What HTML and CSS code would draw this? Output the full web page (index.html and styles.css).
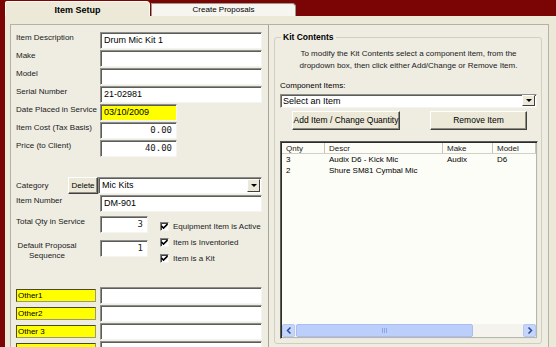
FILE: index.html
```html
<!DOCTYPE html>
<html>
<head>
	<meta charset="UTF-8">
	<title>Item Setup</title>
	<link rel="stylesheet" href="styles.css">
</head>
<body>

<div class="tabs">
	<div class="tab tabOn">Item Setup</div>
	<div class="tab">Create Proposals</div>
</div>

<div class="panel">
<div class="frame">

	<div class="left">
		<div class="row"><span class="lbl">Item Description</span><span class="box wide">Drum Mic Kit 1</span></div>
		<div class="row"><span class="lbl">Make</span><span class="box wide"></span></div>
		<div class="row"><span class="lbl">Model</span><span class="box wide"></span></div>
		<div class="row"><span class="lbl">Serial Number</span><span class="box wide">21-02981</span></div>
		<div class="row"><span class="lbl">Date Placed in Service</span><span class="box short yellow">03/10/2009</span></div>
		<div class="row"><span class="lbl">Item Cost (Tax Basis)</span><span class="box short num">0.00</span></div>
		<div class="row"><span class="lbl">Price (to Client)</span><span class="box short num">40.00</span></div>

		<div class="catRow">
			<span class="lbl catLbl">Category</span>
			<span class="btn delBtn">Delete</span>
			<span class="box combo catCombo">Mic Kits<span class="drop"><i></i></span></span>
		</div>
		<div class="row"><span class="lbl">Item Number</span><span class="box wide">DM-901</span></div>

		<div class="qtyBlock">
			<div class="qtyCol">
				<div class="row"><span class="lbl">Total Qty in Service</span><span class="box tiny num">3</span></div>
				<div class="row seqRow"><span class="lbl seqLbl">Default Proposal<br>Sequence</span><span class="box tiny num">1</span></div>
			</div>
			<div class="checks">
				<div class="chk"><span class="cb"><svg width="7" height="7" viewBox="0 0 7 7"><path d="M0.5 3 L2.5 5 L6.5 1" fill="none" stroke="#000" stroke-width="1.6"/></svg></span>Equipment Item is Active</div>
				<div class="chk"><span class="cb"><svg width="7" height="7" viewBox="0 0 7 7"><path d="M0.5 3 L2.5 5 L6.5 1" fill="none" stroke="#000" stroke-width="1.6"/></svg></span>Item is Inventoried</div>
				<div class="chk"><span class="cb"><svg width="7" height="7" viewBox="0 0 7 7"><path d="M0.5 3 L2.5 5 L6.5 1" fill="none" stroke="#000" stroke-width="1.6"/></svg></span>Item is a Kit</div>
			</div>
		</div>

		<div class="others">
			<div class="row"><span class="ylbl">Other1</span><span class="box wide"></span></div>
			<div class="row"><span class="ylbl">Other2</span><span class="box wide"></span></div>
			<div class="row"><span class="ylbl">Other 3</span><span class="box wide"></span></div>
			<div class="row"><span class="ylbl">Supplier</span><span class="box wide"></span></div>
		</div>
	</div>

	<fieldset class="kit">
		<legend>Kit Contents</legend>
		<p class="help">To modify the Kit Contents select a component item, from the<br>dropdown box, then click either Add/Change or Remove Item.</p>
		<div class="compLbl">Component Items:</div>
		<span class="box combo compCombo">Select an Item<span class="drop"><i></i></span></span>
		<div class="kitBtns">
			<span class="btn addBtn">Add Item / Change Quantity</span>
			<span class="btn remBtn">Remove Item</span>
		</div>

		<div class="list">
			<div class="lhead">
				<span class="c1">Qnty</span><span class="c2">Descr</span><span class="c3">Make</span><span class="c4">Model</span>
			</div>
			<div class="lrow"><span class="c1">3</span><span class="c2">Audix D6 - Kick Mic</span><span class="c3">Audix</span><span class="c4">D6</span></div>
			<div class="lrow"><span class="c1">2</span><span class="c2">Shure SM81 Cymbal Mic</span><span class="c3"></span><span class="c4"></span></div>
			<div class="lfill"></div>
			<div class="hscroll">
				<span class="sarrow"><svg width="6" height="7" viewBox="0 0 6 7"><path d="M4.5 0.5 L1.5 3.5 L4.5 6.5" fill="none" stroke="#2c4c9c" stroke-width="1.5"/></svg></span>
				<span class="thumb"><span class="grip"></span></span>
				<span class="track"></span>
				<span class="sarrow"><svg width="6" height="7" viewBox="0 0 6 7"><path d="M1.5 0.5 L4.5 3.5 L1.5 6.5" fill="none" stroke="#2c4c9c" stroke-width="1.5"/></svg></span>
			</div>
		</div>
	</fieldset>

</div>
</div>

</body>
</html>
```

FILE: styles.css
```css
body{
	margin:0;
	background:#7b0404;
	font-family:"Liberation Sans", Arial, sans-serif;
	font-size:8px;
	color:#000;
	overflow:hidden;
}

/* tabs */
.tabs{
	height:16px;
	padding-left:5px;
	display:flex;
	align-items:flex-end;
}
.tab{
	width:143px;
	height:12px;
	line-height:12px;
	text-align:center;
	background:#f6f5ef;
	border:1px solid #9a988a;
	border-bottom:none;
	border-radius:0 4px 0 0;
	font-size:8px;
}
.tabOn{
	height:14px;
	line-height:16px;
	background:#ece9d8;
	font-weight:bold;
	font-size:9px;
	border-color:#fbfaf4;
	border-radius:2px 4px 0 0;
	margin-right:1px;
}

/* panel */
.panel{
	margin-left:5px;
	height:331px;
	background:#ece9d8;
	padding-top:8px;
	padding-left:5px;
}
.frame{
	width:537px;
	height:330px;
	border:1px solid #b4b2a4;
	border-bottom:none;
	background:#efede2;
	display:flex;
	align-items:flex-start;
}

/* left column */
.left{
	width:252px;
	height:330px;
	padding:7px 0 0 5px;
	border-right:1px solid #a7a597;
}
.row{
	display:flex;
	height:17px;
	margin-bottom:1px;
}
.lbl{
	width:84px;
	line-height:12px;
	white-space:nowrap;
	color:#1a1a1a;
}
.box{
	box-sizing:border-box;
	height:17px;
	background:#fff;
	border:1px solid;
	border-color:#8e8e8a #f4f4f0 #f4f4f0 #8e8e8a;
	box-shadow:inset 1px 1px 0 #5c5c58;
	font-size:9px;
	line-height:15px;
	padding-left:3px;
	white-space:nowrap;
	overflow:hidden;
}
.wide{ width:162px; }
.short{ width:77px; }
.tiny{ width:48px; }
.yellow{ background:#ffff00; }
.num{
	text-align:right;
	padding-right:4px;
	font-family:"DejaVu Sans Mono", "Liberation Mono", monospace;
	font-size:9px;
	color:#222;
}

/* category */
.catRow{
	display:flex;
	height:17px;
	margin-top:20px;
	margin-bottom:1px;
}
.catLbl{
	width:52px;
	padding-top:3px;
}
.btn{
	box-sizing:border-box;
	display:block;
	background:#ece9d8;
	border:1px solid;
	border-color:#ffffff #404040 #404040 #ffffff;
	box-shadow:inset -1px -1px 0 #8e8c80;
	text-align:center;
	white-space:nowrap;
}
.delBtn{
	width:30px;
	height:17px;
	line-height:15px;
}
.combo{
	display:flex;
	justify-content:space-between;
	padding-right:1px;
}
.catCombo{
	width:164px;
}
.drop{
	width:13px;
	height:13px;
	margin-top:1px;
	box-sizing:border-box;
	background:#ece9d8;
	border:1px solid;
	border-color:#ffffff #404040 #404040 #ffffff;
	display:flex;
	align-items:center;
	justify-content:center;
}
.drop i{
	width:0;
	height:0;
	border-left:3px solid transparent;
	border-right:3px solid transparent;
	border-top:3px solid #000;
}

/* qty and checks */
.qtyBlock{
	display:flex;
	margin-top:4px;
}
.qtyCol{
	width:144px;
}
.seqRow{
	margin-top:7px;
	height:21px;
}
.seqLbl{
	width:62px;
	margin-right:22px;
	line-height:10px;
	text-align:center;
	padding-top:1px;
}
.checks{
	padding-top:2px;
}
.chk{
	display:flex;
	align-items:center;
	height:16px;
	white-space:nowrap;
	color:#1a1a1a;
}
.cb{
	box-sizing:border-box;
	width:9px;
	height:9px;
	margin-right:4px;
	background:#fff;
	border:1px solid;
	border-color:#808080 #f4f4f0 #f4f4f0 #808080;
	box-shadow:inset 1px 1px 0 #404040;
	display:flex;
	align-items:center;
	justify-content:center;
}

/* other fields */
.others{
	margin-top:21px;
}
.ylbl{
	box-sizing:border-box;
	width:80px;
	height:13px;
	margin-top:2px;
	margin-right:4px;
	background:#ffff00;
	border:1px solid #4a4a2a;
	border-right-color:#9a9a70;
	border-bottom-color:#9a9a70;
	line-height:11px;
	padding-left:1px;
}

/* kit contents */
.kit{
	box-sizing:border-box;
	width:268px;
	height:313px;
	margin:6px 0 0 5px;
	padding:0 4px 0 5px;
	border:1px solid #d0cebf;
	border-radius:3px;
	min-width:0;
}
.kit legend{
	padding:0 2px;
	margin-left:1px;
	font-weight:bold;
	font-size:8.5px;
	line-height:12px;
}
.help{
	margin:5px 0 0 0;
	line-height:12px;
	text-align:center;
	color:#1a1a1a;
}
.compLbl{
	margin-top:8px;
	line-height:12px;
}
.compCombo{
	width:257px;
	height:14px;
	margin-top:2px;
	line-height:12px;
	padding-left:2px;
}
.compCombo .drop{
	height:11px;
	margin-top:0;
}
.kitBtns{
	display:flex;
	margin-top:3px;
	padding-left:12px;
}
.addBtn{
	width:108px;
	height:19px;
	line-height:17px;
	font-size:8.5px;
}
.remBtn{
	width:97px;
	height:19px;
	line-height:17px;
	margin-left:30px;
	font-size:8.5px;
}

/* list */
.list{
	box-sizing:border-box;
	width:258px;
	height:198px;
	margin-top:11px;
	background:#fdfdf7;
	border:1px solid;
	border-color:#5a5a56 #e8e8e0 #e8e8e0 #5a5a56;
	box-shadow:inset 1px 1px 0 #2c2c2a, inset -1px -1px 0 #b8b6aa;
	padding:1px;
	display:flex;
	flex-direction:column;
}
.lhead{
	display:flex;
	height:10px;
	line-height:11px;
	background:#fdfdf8;
	border-bottom:1px solid #d2d0c4;
	color:#222;
}
.lhead span{
	border-right:1px solid #c6c4b8;
}
.lrow{
	display:flex;
	height:11px;
	line-height:11px;
}
.c1,.c2,.c3,.c4{
	box-sizing:border-box;
	padding-left:4px;
	white-space:nowrap;
	overflow:hidden;
}
.c1{ width:43px; }
.c2{ width:118px; }
.c3{ width:50px; }
.c4{ width:43px; }
.lfill{ flex:1; }
.hscroll{
	display:flex;
	height:13px;
	background:#f4f3ee;
}
.sarrow{
	box-sizing:border-box;
	width:13px;
	height:13px;
	background:#c6d6fb;
	border:1px solid #b4c8f6;
	border-radius:2px;
	display:flex;
	align-items:center;
	justify-content:center;
}
.thumb{
	box-sizing:border-box;
	width:177px;
	height:13px;
	margin-left:1px;
	background:#bccffa;
	border:1px solid #a9bdf0;
	border-radius:2px;
	display:flex;
	align-items:center;
	justify-content:center;
}
.grip{
	width:5px;
	height:5px;
	background:repeating-linear-gradient(90deg, #8ca6e8 0 1px, transparent 1px 2px);
}
.track{ flex:1; }
```
